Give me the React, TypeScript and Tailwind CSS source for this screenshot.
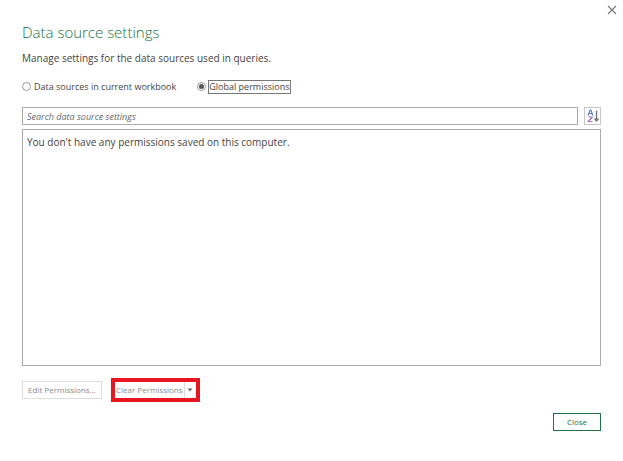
import { useState } from 'react';

type Scope = 'workbook' | 'global';

interface ScopeOptionProps {
  label: string;
  value: Scope;
  selected: Scope;
  onSelect: (value: Scope) => void;
}

function ScopeOption({ label, value, selected, onSelect }: ScopeOptionProps) {
  const checked = selected === value;

  return (
    <label className="flex items-start gap-0.5">
      <input
        type="radio"
        name="scope"
        value={value}
        checked={checked}
        onChange={() => onSelect(value)}
        className="mt-0.5 size-[9px] appearance-none rounded-full border border-[#999999] bg-white bg-clip-content p-px outline-none checked:bg-[#555555]"
      />
      <span className={checked ? 'border border-[#777777]' : 'border border-transparent'}>{label}</span>
    </label>
  );
}

function SortIcon() {
  return (
    <svg viewBox="0 0 14 14" className="size-3.5" fill="none" aria-hidden="true">
      <path d="M2 6.5 4.2 1h.6L7 6.5M2.8 4.7h3.4" stroke="#5b84c4" strokeWidth="1.2" />
      <path d="M2.4 8h4L2.2 12.5h4.4" stroke="#a873bd" strokeWidth="1.2" />
      <path d="M10.5 1.5v10M8.5 9.5l2 2.5 2-2.5" stroke="#777777" strokeWidth="1.4" />
    </svg>
  );
}

export default function App() {
  const [scope, setScope] = useState<Scope>('global');
  const [query, setQuery] = useState('');

  return (
    <main className="flex min-h-screen flex-col bg-white pb-[30px] font-['Open_Sans','Noto_Sans',sans-serif] text-[10px] leading-3 text-[#444444]">
      <div className="flex justify-end px-[5px] pt-1">
        <button type="button" aria-label="Close window" className="p-px">
          <svg viewBox="0 0 10 10" className="size-2.5" fill="none" aria-hidden="true">
            <path d="M1 1l8 8M9 1l-8 8" stroke="#777777" strokeWidth="1.1" />
          </svg>
        </button>
      </div>

      <div className="flex grow flex-col px-[22px] pt-1.5">
        <h1 className="text-[15px] leading-5 font-light text-[#217346]">Data source settings</h1>
        <p className="mt-2.5">Manage settings for the data sources used in queries.</p>

        <div role="radiogroup" aria-label="Scope" className="mt-4 flex gap-5 text-[9px] leading-3">
          <ScopeOption label="Data sources in current workbook" value="workbook" selected={scope} onSelect={setScope} />
          <ScopeOption label="Global permissions" value="global" selected={scope} onSelect={setScope} />
        </div>

        <div className="mt-[13px] flex gap-1.5">
          <input
            type="text"
            aria-label="Search data source settings"
            placeholder="Search data source settings"
            value={query}
            onChange={(e) => setQuery(e.target.value)}
            className="h-[18px] min-w-0 grow border border-[#ababab] px-1 text-[9px] outline-none placeholder:text-[#666666] placeholder:italic"
          />
          <button
            type="button"
            aria-label="Sort"
            className="flex h-[18px] w-[17px] items-center justify-center border border-[#c6c6c6]"
          >
            <SortIcon />
          </button>
        </div>

        <section className="mt-1 grow border border-[#ababab] px-1 py-1.5">
          <p>You don't have any permissions saved on this computer.</p>
        </section>

        <div className="mt-3 flex items-center gap-[9px] text-[8px] text-[#8c8c8c]">
          <button type="button" disabled className="h-[18px] w-20 border border-[#dddddd]">
            Edit Permissions...
          </button>
          <div className="flex h-6 items-stretch border-4 border-[#e81620]">
            <button type="button" disabled className="px-px">
              Clear Permissions
            </button>
            <button
              type="button"
              disabled
              aria-label="More clear options"
              className="flex w-3 items-center justify-center border-l border-[#dddddd]"
            >
              <svg viewBox="0 0 6 4" className="h-1 w-1.5" aria-hidden="true">
                <path d="M0.5 0.5h5L3 3.5z" fill="#666666" />
              </svg>
            </button>
          </div>
        </div>

        <div className="mt-[11px] flex justify-end">
          <button type="button" className="h-[18px] w-12 border border-[#217346] text-[8px] text-[#217346]">
            Close
          </button>
        </div>
      </div>
    </main>
  );
}
